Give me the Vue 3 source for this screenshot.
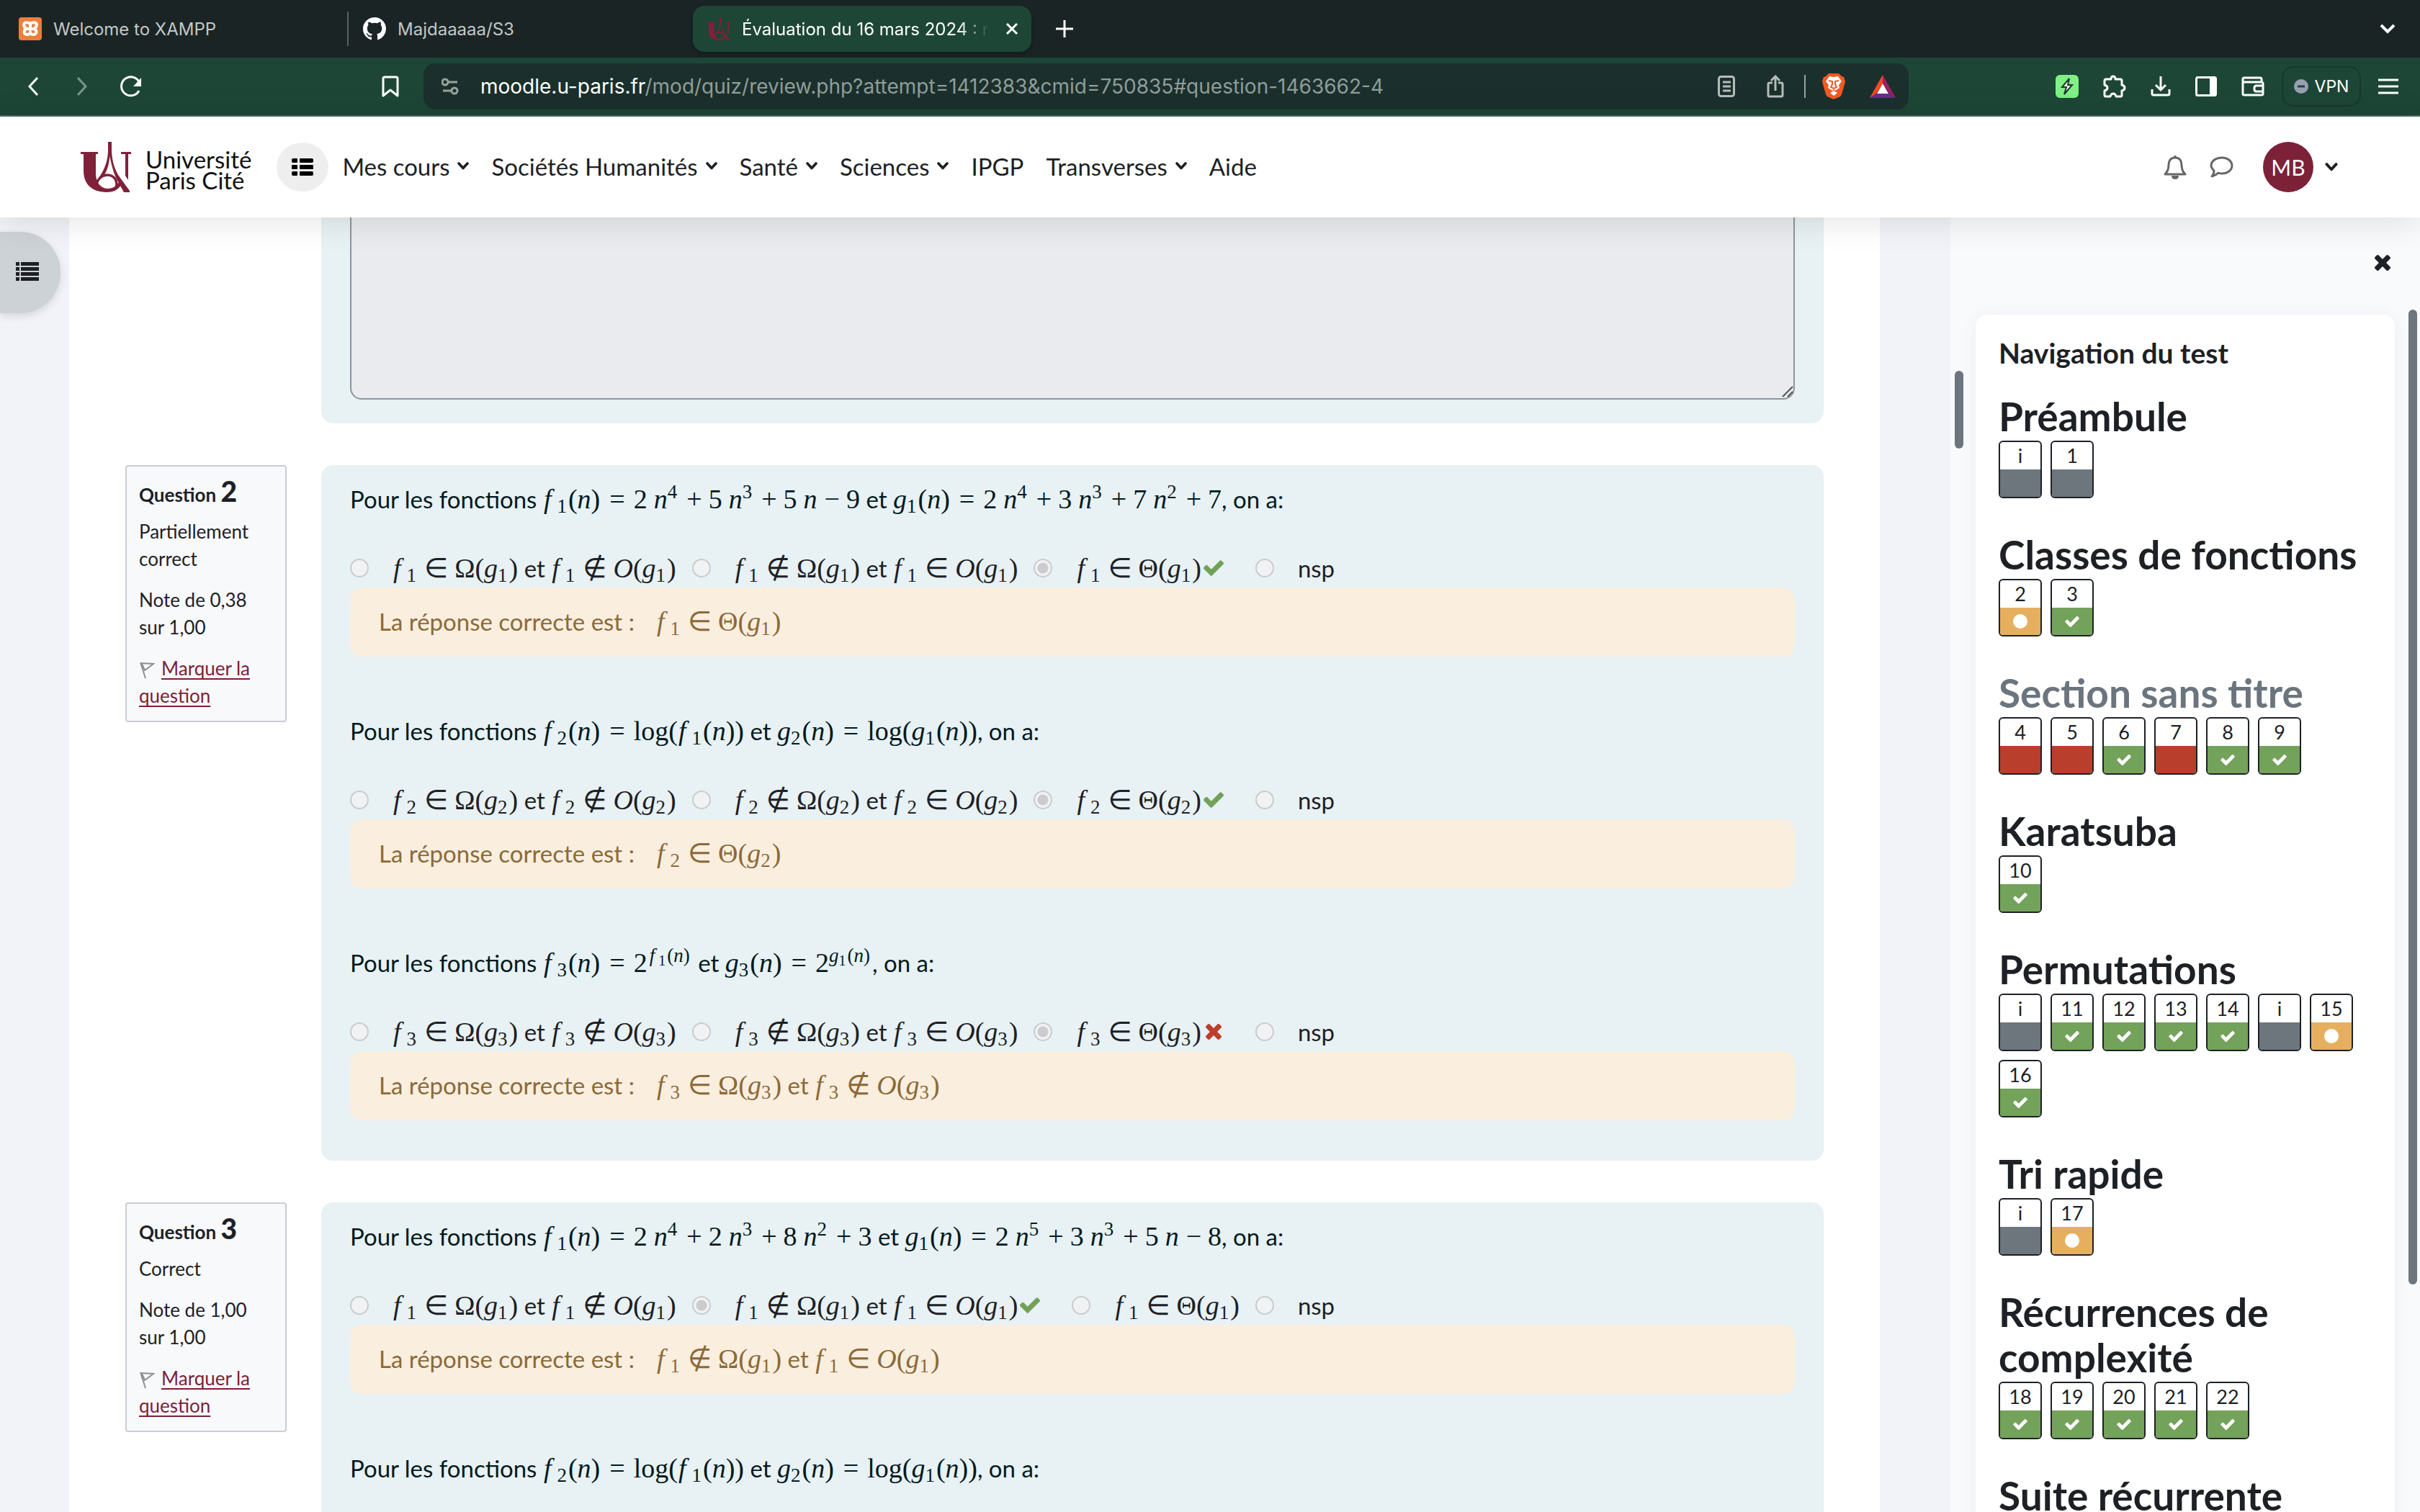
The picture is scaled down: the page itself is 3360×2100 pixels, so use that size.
<script setup>
import { h } from 'vue'

/* Small formula notation: _x lowers, ^x or ^{...} raises, ~ is a thin space. */
function formula(src) {
  const out = []
  let i = 0
  while (i < src.length) {
    const c = src[i]
    if (c === '_') {
      out.push(h('sub', src[i + 1]))
      i += 2
    } else if (c === '^') {
      if (src[i + 1] === '{') {
        const end = src.indexOf('}', i)
        out.push(h('sup', { class: 'expr' }, formula(src.slice(i + 2, end))))
        i = end + 1
      } else {
        out.push(h('sup', src[i + 1]))
        i += 2
      }
    } else if (src.startsWith('log', i)) {
      out.push('log')
      i += 3
    } else if ('fgnO'.includes(c)) {
      out.push(h('i', { class: c === 'f' ? 'var-f' : null }, c))
      i += 1
    } else if (c === '=') {
      out.push(h('span', { class: 'eq' }, c))
      i += 1
    } else if ('∈∉'.includes(c)) {
      out.push(h('span', { class: 'rel' }, c))
      i += 1
    } else if ('+−'.includes(c)) {
      out.push(h('span', { class: 'bin' }, c))
      i += 1
    } else if (c === '~') {
      out.push(h('span', { class: 'thin' }))
      i += 1
    } else {
      out.push(c)
      i += 1
    }
  }
  return out
}

const RichText = (props) =>
  h('span', { class: 'rich' }, props.text.split('$').map((part, n) =>
    n % 2 ? h('span', { class: 'math' }, formula(part)) : part))
RichText.props = ['text']

const omegaNotO = (k) => `$f_${k}∈Ω(g_${k})$ et $f_${k}∉O(g_${k})$`
const notOmegaO = (k) => `$f_${k}∉Ω(g_${k})$ et $f_${k}∈O(g_${k})$`
const theta = (k) => `$f_${k}∈Θ(g_${k})$`
const choices = (k) => [omegaNotO(k), notOmegaO(k), theta(k), 'nsp']

const questions = [
  {
    number: 2,
    state: 'Partiellement correct',
    grade: 'Note de 0,38 sur 1,00',
    parts: [
      { prompt: 'Pour les fonctions $f_1(n)=2~n^4+5~n^3+5~n−9$ et $g_1(n)=2~n^4+3~n^3+7~n^2+7$, on a:', k: 1, picked: 2, ok: true, answer: theta(1) },
      { prompt: 'Pour les fonctions $f_2(n)=log(f_1(n))$ et $g_2(n)=log(g_1(n))$, on a:', k: 2, picked: 2, ok: true, answer: theta(2) },
      { prompt: 'Pour les fonctions $f_3(n)=2^{f_1(n)}$ et $g_3(n)=2^{g_1(n)}$, on a:', k: 3, picked: 2, ok: false, answer: omegaNotO(3) },
    ],
  },
  {
    number: 3,
    state: 'Correct',
    grade: 'Note de 1,00 sur 1,00',
    parts: [
      { prompt: 'Pour les fonctions $f_1(n)=2~n^4+2~n^3+8~n^2+3$ et $g_1(n)=2~n^5+3~n^3+5~n−8$, on a:', k: 1, picked: 1, ok: true, answer: notOmegaO(1) },
      { prompt: 'Pour les fonctions $f_2(n)=log(f_1(n))$ et $g_2(n)=log(g_1(n))$, on a:', k: 2, picked: 1, ok: true, answer: notOmegaO(2) },
    ],
  },
]

const menu = [
  { label: 'Mes cours', drop: true },
  { label: 'Sociétés Humanités', drop: true },
  { label: 'Santé', drop: true },
  { label: 'Sciences', drop: true },
  { label: 'IPGP', drop: false },
  { label: 'Transverses', drop: true },
  { label: 'Aide', drop: false },
]

const sections = [
  { title: 'Préambule', items: [['i', 'info'], ['1', 'info']] },
  { title: 'Classes de fonctions', items: [['2', 'partial'], ['3', 'ok']] },
  { title: 'Section sans titre', muted: true, items: [['4', 'bad'], ['5', 'bad'], ['6', 'ok'], ['7', 'bad'], ['8', 'ok'], ['9', 'ok']] },
  { title: 'Karatsuba', items: [['10', 'ok']] },
  { title: 'Permutations', items: [['i', 'info'], ['11', 'ok'], ['12', 'ok'], ['13', 'ok'], ['14', 'ok'], ['i', 'info'], ['15', 'partial'], ['16', 'ok']] },
  { title: 'Tri rapide', items: [['i', 'info'], ['17', 'partial']] },
  { title: 'Récurrences de complexité', items: [['18', 'ok'], ['19', 'ok'], ['20', 'ok'], ['21', 'ok'], ['22', 'ok']] },
  { title: 'Suite récurrente', items: [] },
]
</script>

<template>
  <div class="window">
    <svg class="defs" aria-hidden="true">
      <symbol id="check" viewBox="121 334 1550 1188"><path fill="currentColor" d="M1671 566q0 40-28 68l-724 724-136 136q-28 28-68 28t-68-28l-136-136-362-362q-28-28-28-68t28-68l136-136q28-28 68-28t68 28l294 295 656-657q28-28 68-28t68 28l136 136q28 28 28 68z" /></symbol>
      <symbol id="cross" viewBox="302 366 1188 1188"><path fill="currentColor" d="M1490 1322q0 40-28 68l-136 136q-28 28-68 28t-68-28l-294-294-294 294q-28 28-68 28t-68-28l-136-136q-28-28-28-68t28-68l294-294-294-294q-28-28-28-68t28-68l136-136q28-28 68-28t68 28l294 294 294-294q28-28 68-28t68 28l136 136q28 28 28 68t-28 68l-294 294 294 294q28 28 28 68z" /></symbol>
      <symbol id="caret" viewBox="0 0 16 11"><path fill="none" stroke="currentColor" stroke-width="3.6" stroke-linecap="round" stroke-linejoin="round" d="M2 2l6 6.500 6-6.500" /></symbol>
      <symbol id="logo" viewBox="0 0 70 70">
        <path fill="#7f2139" d="M0 14H24V17H21V44C21 56 27 64 37 65C44 65 50 62 53 56L57 59C52 67 45 70 35 70C14 69 4 58 4 40V17H0Z" />
        <path fill="#7f2139" d="M38 0h5v14c1 14 4 23 9 32l16 22v2H60L49 50C44 38 42 28 40.500 20C39 32 37 42 29 51l-4-1C35 36 37 26 38 14Z" />
        <path fill="#7f2139" d="M56 14h14v3h-4v36l-4-6V17h-6z" />
        <path fill="none" stroke="#7f2139" stroke-width="3.500" d="M22 58C26 44 44 42 49 54C51 60 50 64 46 67" />
      </symbol>
    </svg>

    <header class="tabs">
      <div class="tab">
        <svg width="32" height="32" viewBox="0 0 32 32"><rect width="32" height="32" rx="4" fill="#ed7e3b" /><path fill="none" stroke="#fff" stroke-width="4" stroke-linejoin="round" stroke-linecap="round" d="M16 10c0-3-8-4-9 0 0 3 2 5 4 6-4 1-5 7 0 8 3 0 5-1 5-4M16 10c0-3 8-4 9 0 0 3-2 5-4 6 4 1 5 7 0 8-3 0-5-1-5-4M16 10v5M12 16h8" /></svg>
        <span class="tab-title">Welcome to XAMPP</span>
      </div>
      <div class="tab divided">
        <svg width="32" height="32" viewBox="0 0 16 16"><path fill="#fff" d="M8 0C3.580 0 0 3.580 0 8c0 3.540 2.290 6.530 5.470 7.590.4.070.55-.17.55-.38 0-.19-.01-.82-.01-1.490-2.010.37-2.530-.49-2.690-.94-.09-.23-.48-.94-.82-1.130-.28-.15-.68-.52-.01-.53.63-.01 1.080.58 1.230.82.72 1.210 1.870.87 2.330.66.07-.52.28-.87.51-1.070-1.780-.2-3.640-.89-3.640-3.950 0-.87.31-1.590.82-2.150-.08-.2-.36-1.020.08-2.120 0 0 .67-.21 2.200.82.64-.18 1.320-.27 2-.27s1.360.09 2 .27c1.530-1.040 2.200-.82 2.200-.82.44 1.100.16 1.920.08 2.120.51.56.82 1.270.82 2.150 0 3.070-1.870 3.750-3.650 3.950.29.25.54.73.54 1.480 0 1.070-.01 1.930-.01 2.200 0 .21.15.46.55.38A8.010 8.010 0 0 0 16 8c0-4.420-3.580-8-8-8z" /></svg>
        <span class="tab-title">Majdaaaaa/S3</span>
      </div>
      <div class="tab active">
        <svg width="32" height="32"><use href="#logo" /></svg>
        <span class="tab-title">Évaluation du 16 mars 2024 : relecture</span>
        <button class="plain" aria-label="Fermer l’onglet"><svg width="18" height="18" viewBox="0 0 18 18"><path stroke="#fff" stroke-width="3" d="M2 2l14 14M16 2L2 16" /></svg></button>
      </div>
      <button class="plain new-tab" aria-label="Nouvel onglet"><svg width="24" height="24" viewBox="0 0 24 24"><path stroke="#fff" stroke-width="3" d="M12 0v24M0 12h24" /></svg></button>
      <button class="plain tab-list" aria-label="Liste des onglets"><svg width="22" height="14" viewBox="0 0 22 14"><path fill="none" stroke="#fff" stroke-width="4" d="M2 2l9 9 9-9" /></svg></button>
    </header>

    <div class="toolbar">
      <div class="tools-left">
        <button class="plain" aria-label="Précédent"><svg width="16" height="28" viewBox="0 0 16 28"><path fill="none" stroke="#fff" stroke-width="3" d="M14 2L3 14l11 12" /></svg></button>
        <button class="plain forward" aria-label="Suivant"><svg width="16" height="28" viewBox="0 0 16 28"><path fill="none" stroke="#7d958b" stroke-width="3" d="M2 2l11 12L2 26" /></svg></button>
        <button class="plain" aria-label="Recharger"><svg width="32" height="32" viewBox="0 0 32 32"><path fill="none" stroke="#fff" stroke-width="3" d="M27 22A13 13 0 1 1 28 12" /><path fill="#fff" d="M30 4v12H19z" /></svg></button>
        <button class="plain bookmark" aria-label="Favori"><svg width="24" height="30" viewBox="0 0 24 30"><path fill="none" stroke="#fff" stroke-width="3" stroke-linejoin="round" d="M2 4q0-2 2-2h16q2 0 2 2v24l-10-8-10 8z" /></svg></button>
      </div>
      <div class="address">
        <svg width="24" height="24" viewBox="0 0 24 24"><g fill="none" stroke="#98a39f" stroke-width="3"><circle cx="5" cy="6" r="4" /><path d="M9 6h13M2 18h12" /><circle cx="18" cy="18" r="4" /></g></svg>
        <div class="url"><span class="host">moodle.u-paris.fr</span>/mod/quiz/review.php?attempt=1412383&amp;cmid=750835#question-1463662-4</div>
        <button class="plain" aria-label="Mode lecture"><svg width="24" height="30" viewBox="0 0 24 30"><g fill="none" stroke="#b5bcba" stroke-width="3"><rect x="1.500" y="1.500" width="21" height="27" rx="3" /><path d="M7 9h11M7 15h11M7 21h11" /></g></svg></button>
        <button class="plain share" aria-label="Partager"><svg width="24" height="32" viewBox="0 0 24 32"><path fill="none" stroke="#b5bcba" stroke-width="3" d="M8 11H4q-2 0-2 2v15q0 2 2 2h16q2 0 2-2V13q0-2-2-2h-4M12 22V3M6 8l6-6 6 6" /></svg></button>
        <span class="bar"></span>
        <button class="plain brave" aria-label="Boucliers"><svg width="32" height="36" viewBox="0 0 32 36"><path fill="#f15a24" d="M9 0h14l4 4 3 1 2 6-1 4-4 14q-1 3-4 4l-7 3-7-3q-3-1-4-4L1 15 0 11l2-6 3-1z" /><path fill="#fff" d="M16 5l6-1 5 7-4 5 1 4-6 4-2-2-2 2-6-4 1-4-4-5 5-7zM16 24l5 3-5 4-5-4z" /><path stroke="#f15a24" stroke-width="2" fill="none" d="M9 10l5 1v4l-2 4 4 2 4-2-2-4v-4l5-1" /></svg></button>
        <button class="plain" aria-label="Récompenses"><svg width="36" height="32" viewBox="0 0 36 32"><path fill="#ff4724" d="M18 0v12L9 26 0 32z" /><path fill="#9e1f63" d="M18 0l18 32-9-6-9-14z" /><path fill="#662d91" d="M0 32l9-6h18l9 6z" /><path fill="#fff" d="M18 12l8 14H10z" /></svg></button>
      </div>
      <div class="tools-right">
        <button class="plain" aria-label="Extension"><svg width="32" height="32" viewBox="0 0 32 32"><rect width="32" height="32" rx="6" fill="#7fef86" /><path fill="#fff" stroke="#22352a" stroke-width="2" d="M19 5L9 17h6l-3 10 11-13h-6z" /></svg></button>
        <button class="plain" aria-label="Extensions"><svg width="32" height="32" viewBox="0 0 32 32"><path fill="none" stroke="#fff" stroke-width="3" stroke-linejoin="round" d="M4 6h7q0-4 3-4t3 4h7q2 0 2 2v6q4 1 4 4t-4 4v6q0 2-2 2h-6q-1-4-4-4t-4 4H4q-2 0-2-2v-6q4-1 4-4t-4-4V8q0-2 2-2z" /></svg></button>
        <button class="plain" aria-label="Téléchargements"><svg width="28" height="28" viewBox="0 0 28 28"><path fill="none" stroke="#fff" stroke-width="3" d="M14 0v18M7 12l7 7 7-7M2 18v6q0 2 2 2h20q2 0 2-2v-6" /></svg></button>
        <button class="plain" aria-label="Panneau latéral"><svg width="30" height="28" viewBox="0 0 30 28"><rect x="1.500" y="1.500" width="27" height="25" rx="2" fill="none" stroke="#fff" stroke-width="3" /><path fill="#fff" d="M20 1h9v26h-9z" /></svg></button>
        <button class="plain" aria-label="Portefeuille"><svg width="32" height="28" viewBox="0 0 32 28"><path fill="none" stroke="#fff" stroke-width="3" stroke-linejoin="round" d="M28 8V4q0-2-2-2H4Q2 2 2 4v20q0 2 2 2h24q2 0 2-2V10q0-2-2-2H2M30 13h-9q-3 0-3 3v2q0 3 3 3h9" /></svg></button>
        <button class="vpn"><svg width="20" height="20" viewBox="0 0 20 20"><circle cx="10" cy="10" r="10" fill="#98a0b3" /><path stroke="#1d4636" stroke-width="3" d="M5 10h10" /></svg>VPN</button>
        <button class="plain" aria-label="Menu"><svg width="28" height="22" viewBox="0 0 28 22"><path stroke="#fff" stroke-width="3" d="M0 2h28M0 11h28M0 20h28" /></svg></button>
      </div>
    </div>

    <nav class="site">
      <a href="#" class="brand"><svg width="70" height="70"><use href="#logo" /></svg><span>Université<br>Paris Cité</span></a>
      <button class="round" aria-label="Sommaire"><svg width="30" height="24" viewBox="0 0 30 24"><path d="M2 0h5q1 0 1 1v4q0 1-1 1H2Q0 6 0 4V2q0-2 2-2zM12 0h16q2 0 2 2v2q0 2-2 2H12q-1 0-1-1V1q0-1 1-1zM1 9h6q1 0 1 1v4q0 1-1 1H1q-1 0-1-1v-4q0-1 1-1zM12 9h17q1 0 1 1v4q0 1-1 1H12q-1 0-1-1v-4q0-1 1-1zM2 18h5q1 0 1 1v4q0 1-1 1H2q-2 0-2-2v-2q0-2 2-2zM12 18h16q2 0 2 2v2q0 2-2 2H12q-1 0-1-1v-4q0-1 1-1z" /></svg></button>
      <a v-for="m in menu" :key="m.label" href="#" class="item">{{ m.label }}<svg v-if="m.drop" width="16" height="11"><use href="#caret" /></svg></a>
      <div class="user">
        <button class="plain" aria-label="Notifications"><svg width="32" height="34" viewBox="0 0 32 34"><path fill="none" stroke="#666" stroke-width="3" stroke-linejoin="round" d="M16 4c-6 0-9 4-9 10 0 7-2 10-5 13h28c-3-3-5-6-5-13 0-6-3-10-9-10zM16 1v3" /><path fill="#666" d="M11 29h10q0 5-5 5t-5-5z" /></svg></button>
        <button class="plain" aria-label="Messages"><svg width="34" height="30" viewBox="0 0 34 30"><path fill="none" stroke="#666" stroke-width="3" stroke-linejoin="round" d="M18 2c8 0 14 5 14 11s-6 11-14 11c-2 0-4 0-5-1-2 2-5 4-9 5 2-2 3-5 3-8-2-2-4-4-4-7C3 7 9 2 18 2z" /></svg></button>
        <button class="account" aria-label="Menu utilisateur"><span class="avatar">MB</span><svg width="18" height="12"><use href="#caret" /></svg></button>
      </div>
    </nav>

    <div class="body">
      <button class="drawer-toggle" aria-label="Ouvrir l’index du cours"><svg width="32" height="26" viewBox="0 0 32 26"><path fill="#1d2125" d="M0 0h5v5H0zM7 0h25v5H7zM0 7h5v5H0zM7 7h25v5H7zM0 14h5v5H0zM7 14h25v5H7zM0 21h5v5H0zM7 21h25v5H7z" /></svg></button>

      <main class="page">
        <section class="question">
          <div class="spacer"></div>
          <div class="content essay">
            <textarea aria-label="Réponse" readonly></textarea>
            <svg class="grip" width="16" height="16" viewBox="0 0 16 16"><path stroke="#555" stroke-width="2" d="M1 15L15 1M8 15l7-7" /></svg>
          </div>
        </section>

        <section v-for="q in questions" :key="q.number" class="question">
          <aside class="info">
            <h3>Question <b>{{ q.number }}</b></h3>
            <p>{{ q.state }}</p>
            <p>{{ q.grade }}</p>
            <p><svg width="22" height="24" viewBox="0 0 22 24"><path fill="none" stroke="#8c8f92" stroke-width="2" d="M2 1l7 22M2 2l18 1-12 9-4-9" /></svg><a href="#">Marquer la question</a></p>
          </aside>
          <div class="content">
            <div v-for="(p, n) in q.parts" :key="n" class="part">
              <p class="prompt"><RichText :text="p.prompt" /></p>
              <div class="options">
                <template v-for="(c, j) in choices(p.k)" :key="j">
                  <label class="option"><input type="radio" :name="`q${q.number}-${n}`" :checked="j === p.picked" disabled><RichText :text="c" /></label>
                  <svg v-if="j === p.picked && p.ok" class="mark good" width="28" height="22"><use href="#check" /></svg>
                  <svg v-else-if="j === p.picked" class="mark wrong" width="28" height="22"><use href="#cross" /></svg>
                </template>
              </div>
              <div class="answer"><span>La réponse correcte est :</span><RichText :text="p.answer" /></div>
            </div>
          </div>
        </section>
      </main>

      <aside class="drawer">
        <div class="page-scroll"></div>
        <div class="drawer-scroll"></div>
        <div class="drawer-head"><button class="plain" aria-label="Fermer le tiroir"><svg width="22" height="22"><use href="#cross" /></svg></button></div>
        <div class="card">
          <h2>Navigation du test</h2>
          <section v-for="s in sections" :key="s.title" class="group">
            <h3 :class="{ muted: s.muted }">{{ s.title }}</h3>
            <div class="cells">
              <a v-for="(it, i) in s.items" :key="i" href="#" class="cell">
                <span>{{ it[0] }}</span>
                <span class="status" :class="`is-${it[1]}`"><svg v-if="it[1] === 'ok'" width="20" height="15"><use href="#check" /></svg></span>
              </a>
            </div>
          </section>
        </div>
      </aside>
    </div>
  </div>
</template>

<style>
body { margin: 0; overflow: hidden; }
.math { font: 38px/1 "Liberation Serif", "DejaVu Sans", serif; line-height: 0; white-space: nowrap; }
.math i { font-style: italic; }
.math .var-f { margin-left: 1px; margin-right: 8px; }
.math .rel { margin: 0 9px; }
.math .eq { margin: 0 12px 0 13px; }
.math .bin { margin: 0 9px 0 10px; }
.math .thin { display: inline-block; width: 9px; }
.math sub, .math sup { font-size: 27px; line-height: 0; }
.math sub { vertical-align: -6px; margin-right: 2px; }
.math sup { vertical-align: 14px; margin-right: 3px; }
.math .expr sub { font-size: 20px; vertical-align: -5px; }
.math .expr .var-f { margin-left: 3px; margin-right: 5px; }
</style>

<style scoped>
.window { height: 100vh; display: flex; flex-direction: column; overflow: hidden; color: #1d2125; background: #f2f3f8; font-family: Lato, sans-serif; font-size: 33px; }
.defs { position: absolute; width: 0; height: 0; }
svg { display: block; flex: none; }
button { font: inherit; color: inherit; border: 0; padding: 0; cursor: pointer; }
.plain { background: none; display: block; }
h2, h3, p { margin: 0; }

.tabs { height: 80px; flex: none; box-sizing: border-box; display: flex; align-items: center; background: #1a2425; color: #c3c7c6; font: 24px Inter, sans-serif; padding: 0 34px 0 2px; }
.tab { box-sizing: border-box; width: 480px; height: 64px; display: flex; align-items: center; gap: 16px; padding: 0 24px; }
.tab.divided { position: relative; padding-left: 22px; }
.tab.divided::before { content: ""; position: absolute; left: 0; top: 8px; width: 2px; height: 48px; background: #566162; }
.tab.active { width: 470px; padding: 0 18px 0 20px; border-radius: 16px; background: #1d4636; color: #fff; box-shadow: 0 4px 6px rgba(0, 0, 0, .2); }
.tab.active .tab-title { flex: 1; overflow: hidden; white-space: nowrap; mask-image: linear-gradient(to right, #000 86%, transparent 98%); }
.new-tab { margin-left: 34px; }
.tab-list { margin-left: auto; }

.toolbar { height: 82px; flex: none; box-sizing: border-box; display: flex; align-items: center; background: #1d4636; border-bottom: 2px solid #4b6e61; color: #fff; font-family: Inter, sans-serif; }
.tools-left { width: 588px; box-sizing: border-box; display: flex; align-items: center; padding: 0 34px 0 38px; }
.forward { margin: 0 44px 0 52px; }
.bookmark { margin-left: auto; }
.address { flex: 1; min-width: 0; box-sizing: border-box; height: 64px; display: flex; align-items: center; padding: 0 18px 0 25px; border-radius: 16px; background: #1b302c; color: #8f9d99; font-size: 28px; }
.url { flex: 1; margin-left: 30px; white-space: nowrap; overflow: hidden; }
.host { color: #fff; }
.share { margin: 0 28px 0 44px; }
.bar { width: 2px; height: 32px; background: #98a39f; }
.brave { margin: 0 34px 0 23px; }
.tools-right { width: 710px; box-sizing: border-box; display: flex; align-items: center; justify-content: space-between; padding: 0 30px 0 204px; }
.vpn { box-sizing: border-box; width: 110px; height: 56px; display: flex; align-items: center; justify-content: center; gap: 9px; background: none; border: 2px solid #17382b; border-radius: 16px; font-size: 23px; color: #fff; margin: 0 -10px; }

.site { height: 140px; flex: none; box-sizing: border-box; display: flex; align-items: center; gap: 31px; padding: 0 114px 0 112px; background: #fff; box-shadow: 0 4px 48px rgba(0, 0, 0, .12); position: relative; z-index: 2; }
.brand { display: flex; align-items: center; gap: 20px; margin-right: 4px; color: #111; font-size: 33px; line-height: 29px; text-decoration: none; }
.brand span { padding-top: 8px; }
.round { width: 72px; height: 68px; border-radius: 50%; background: #eee; display: flex; align-items: center; justify-content: center; margin-right: -12px; }
.item { display: flex; align-items: center; gap: 11px; padding-bottom: 3px; color: inherit; text-decoration: none; white-space: nowrap; }
.user { margin-left: auto; display: flex; align-items: center; gap: 31px; }
.account { display: flex; align-items: center; gap: 16px; background: none; margin-left: 10px; }
.avatar { width: 70px; height: 70px; border-radius: 50%; background: #7c2138; color: #fff; font-size: 30px; display: flex; align-items: center; justify-content: center; }

.body { flex: 1; min-height: 0; display: flex; position: relative; padding-left: 96px; }
.drawer-toggle { position: absolute; left: 0; top: 20px; z-index: 1; width: 84px; height: 113px; padding: 0 0 4px 22px; border-radius: 0 56px 56px 0; background: #cdd2d6; box-shadow: 0 4px 12px rgba(0, 0, 0, .12); }
.page { flex: 1; min-width: 0; margin-right: 98px; padding: 0 78px; background: #fff; overflow: hidden; display: flex; flex-direction: column; gap: 58px; }
.question { display: flex; align-items: flex-start; gap: 48px; flex: none; }
.spacer { width: 224px; }
.content { flex: 1; min-width: 0; box-sizing: border-box; padding: 23px 40px 56px; border-radius: 16px; background: #e8f1f4; color: #001a1e; line-height: 48px; display: flex; flex-direction: column; gap: 79px; }
.essay { position: relative; padding: 0 40px 33px; border-radius: 0 0 16px 16px; }
textarea { display: block; box-sizing: border-box; width: 100%; height: 253px; border: 2px solid #8f959e; border-top: 0; border-radius: 0 0 16px 16px; background: #e9ebee; resize: none; }
.grip { position: absolute; right: 42px; bottom: 36px; }

.info { box-sizing: border-box; width: 224px; border: 2px solid #cacdd4; border-radius: 4px; background: #f8f9fb; padding: 17px 17px 16px; font-size: 26px; line-height: 38px; display: flex; flex-direction: column; gap: 19px; }
.info h3 { font-size: 26px; line-height: 44px; margin-bottom: -9px; }
.info b { font-size: 39px; font-weight: 900; line-height: 0; }
.info a { color: #7d1f38; text-underline-offset: 4px; text-decoration-thickness: 2px; }
.info svg { display: inline-block; vertical-align: -5px; margin-right: 9px; }

.options { display: flex; align-items: center; margin-top: 48px; color: #1d2125; white-space: nowrap; }
.option { display: flex; align-items: center; gap: 33px; margin-right: 22px; }
.option input { appearance: none; box-sizing: border-box; width: 26px; height: 26px; margin: 0; border: 2px solid #cacccd; border-radius: 50%; background: #f0f2f3; }
.option input:checked { background: radial-gradient(circle, #cbcccd 7px, #f0f2f3 8px); }
.mark { margin: 0 44px 0 -19px; }
.good { color: #72a158; }
.wrong { color: #bd3e2c; }
.answer { display: flex; gap: 30px; margin-top: 3px; padding: 23px 40px 25px; border-radius: 16px; background: #faeedf; color: #8b6a38; }

.drawer { width: 652px; flex: none; box-sizing: border-box; padding: 0 35px; background: #f9fafc; position: relative; }
.page-scroll, .drawer-scroll { position: absolute; width: 12px; border-radius: 6px; background: #6d757d; }
.page-scroll { left: 6px; top: 213px; height: 108px; }
.drawer-scroll { right: 4px; top: 128px; height: 1354px; }
.drawer-head { height: 135px; box-sizing: border-box; padding: 52px 6px 0; display: flex; justify-content: flex-end; align-items: flex-start; }
.card { padding: 32px; border-radius: 16px; background: #fff; box-shadow: 0 0 24px rgba(0, 0, 0, .05); }
.card h2 { font-size: 39px; line-height: 42px; margin-bottom: 36px; }
.group { margin-bottom: 47px; }
.group h3 { font-size: 55px; line-height: 63px; padding-bottom: 2px; }
.group .muted { color: #6c757d; }
.cells { display: flex; flex-wrap: wrap; gap: 12px; margin-right: -12px; }
.cell { box-sizing: border-box; width: 60px; height: 80px; border: 2px solid #1d2125; border-radius: 6px; overflow: hidden; background: #fff; color: #1d2125; font-size: 27px; line-height: 38px; text-align: center; text-decoration: none; display: flex; flex-direction: column; }
.status { height: 38px; display: flex; align-items: center; justify-content: center; color: #fff; }
.is-info { background: #6d757d; }
.is-ok { background: #73a25a; }
.is-bad { background: #b93e2c; }
.is-partial { background: #e6af5f; }
.is-partial::before { content: ""; width: 20px; height: 20px; border-radius: 50%; background: #fff; }
</style>
